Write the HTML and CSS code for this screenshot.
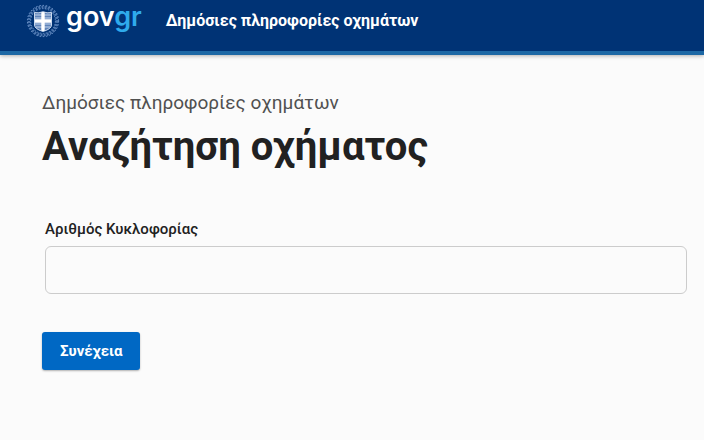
FILE: index.html
```html
<!doctype html>
<html lang="el">
<head>
	<meta charset="utf-8" />
	<meta name="viewport" content="width=device-width, initial-scale=1" />
	<title>Αναζήτηση οχήματος</title>
	<link rel="stylesheet" href="styles.css">
</head>
<body>
	<header class="header">
		<a class="logo" href="#" aria-label="govgr">
			<svg class="emblem" viewBox="0 0 34 34" aria-hidden="true">
				<!-- wreath -->
				<g fill="none" stroke="#7fa3d6">
					<circle cx="17" cy="17" r="14" stroke-width="2.600" stroke-dasharray="2 1.200" opacity=".6" />
					<circle cx="17" cy="17" r="15.600" stroke-width="1" stroke-dasharray="1.500 1.800" />
					<circle cx="17" cy="17" r="12.400" stroke-width=".8" stroke-dasharray="1.600 1.400" />
				</g>
				<!-- shield -->
				<path d="M8.500 8.500q4.500 1 8.500-.8 4 1.800 8.500.8v12.500q0 4-8.500 6.500-8.500-2.500-8.500-6.500z" fill="#5f83b8" />
				<path d="M9 11h16M9 14h16M9 20h16M10 23h14" stroke="#c3d6ee" stroke-width="1.200" />
				<path d="M17 8v19M9 17h16" stroke="#fff" stroke-width="3.400" />
				<path d="M8.500 8.500q4.500 1 8.500-.8 4 1.800 8.500.8v12.500q0 4-8.500 6.500-8.500-2.500-8.500-6.500z" fill="none" stroke="#dce8f7" stroke-width=".9" />
			</svg>
			<span class="logo-text">gov<span class="logo-gr">gr</span></span>
		</a>
		<span class="service-name">Δημόσιες πληροφορίες οχημάτων</span>
	</header>

	<main class="content">
		<p class="caption">Δημόσιες πληροφορίες οχημάτων</p>
		<h1 class="title">Αναζήτηση οχήματος</h1>
		<form class="search-form">
			<div class="field">
				<label for="plate">Αριθμός Κυκλοφορίας</label>
				<input type="text" id="plate" name="plate" />
			</div>
			<button type="submit" class="button">Συνέχεια</button>
		</form>
	</main>
</body>
</html>
```
FILE: styles.css
```css
* { box-sizing: border-box; }
body { margin: 0; background: #fbfbfb; color: #212121; font-family: Roboto, "Liberation Sans", sans-serif; }

.header {
	display: flex;
	align-items: center;
	gap: 24px;
	padding: 0 26px 10px;
	height: 55px;
	background: #003375;
	border-bottom: 4px solid #1d68a5;
	box-shadow: 0 1px 4px rgba(0, 0, 0, .3);
}
.logo { display: flex; align-items: center; gap: 6px; text-decoration: none; color: #fff; }
.emblem { width: 34px; height: 34px; }
.logo-text { font: 600 27px/32px Inter, sans-serif; padding-bottom: 8px; }
.logo-gr { color: #2fabec; }
.service-name { font-size: 16px; line-height: 20px; font-weight: 700; color: #fff; }

.content { padding: 36px 17px 36px 42px; }
.caption { margin: 0; font-size: 19px; line-height: 24px; color: #505050; }
.title { margin: 8px 0 0; font-size: 40px; line-height: 48px; font-weight: 700; }
.search-form { padding-top: 48px; }
.field { padding-left: 3px; }
.field label { display: block; font-size: 15px; line-height: 20px; font-weight: 500; }
.field input {
	display: block;
	width: 100%;
	height: 48px;
	margin-top: 7px;
	padding: 0 12px;
	font: inherit;
	font-size: 16px;
	background: #fbfbfb;
	border: 1px solid #ccc;
	border-radius: 6px;
}
.button {
	margin-top: 38px;
	padding: 9px 18px;
	font: inherit;
	font-size: 15px;
	line-height: 20px;
	font-weight: 700;
	color: #fff;
	background: #0068c4;
	border: 0;
	border-radius: 3px;
	box-shadow: 0 1px 2px rgba(0, 0, 0, .3);
	cursor: pointer;
}
```
